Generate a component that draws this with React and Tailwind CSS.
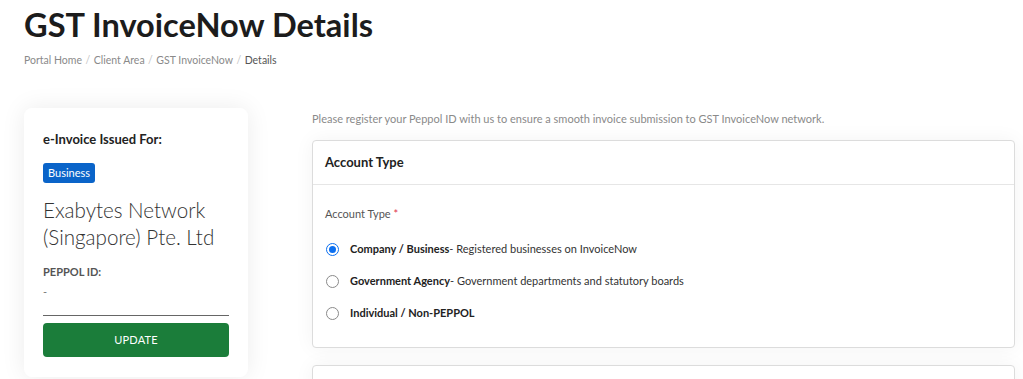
import React from 'react'

const options = [
  { title: 'Company / Business', desc: '- Registered businesses on InvoiceNow', checked: true },
  { title: 'Government Agency', desc: '- Government departments and statutory boards' },
  { title: 'Individual / Non-PEPPOL', desc: '' },
]

const Radio = ({ checked }) => (
  <span
    className={
      checked
        ? 'w-[13px] h-[13px] rounded-full border border-[#0b6ff0] bg-white flex items-center justify-center'
        : 'w-[13px] h-[13px] rounded-full border border-[#8a8a8a] bg-white'
    }
  >
    {checked && <span className="w-[7px] h-[7px] rounded-full bg-[#0b6ff0]" />}
  </span>
)

const App = () => {
  return (
    <div className="h-[379px] bg-white text-[#222] pl-6 pr-2 overflow-hidden" style={{ fontFamily: 'Lato, "Open Sans", sans-serif' }}>
      <h1 className="text-[32.6px] font-bold leading-[48px] pt-[1px] text-[#1c1c1c]">GST InvoiceNow Details</h1>
      <div className="text-[10.5px] leading-4 mt-[3px] text-[#8a8a8a] flex gap-[3.5px]">
        <span>Portal Home</span><span className="text-[#c4c4c4]">/</span>
        <span>Client Area</span><span className="text-[#c4c4c4]">/</span>
        <span>GST InvoiceNow</span><span className="text-[#c4c4c4]">/</span>
        <span className="text-[#555]">Details</span>
      </div>

      <div className="flex gap-16 mt-[40px]">
        <div className="w-[224px] shrink-0">
          <div className="bg-white rounded-lg shadow-[0_0_24px_rgba(0,0,0,0.08)] px-[19px] pt-[23px] pb-5">
            <div className="text-[13px] font-bold leading-4 text-[#222]">e-Invoice Issued For:</div>
            <span className="inline-block mt-[16px] bg-[#0a64c9] text-white text-[11px] leading-[20px] px-[5px] rounded-[3px]">Business</span>
            <div className="text-[20.6px] font-light leading-[27px] mt-[14px] text-[#333]">Exabytes Network (Singapore) Pte. Ltd</div>
            <div className="text-[11px] font-bold text-[#555] mt-[13px] leading-4">PEPPOL ID:</div>
            <div className="text-[11px] text-[#777] leading-4 mt-[4px]">-</div>
            <div className="border-b border-[#666] mt-[15px]"></div>
            <button className="w-full mt-[7px] h-[34px] rounded bg-[#1b7d3a] text-white text-[11px] tracking-[0.2px]">UPDATE</button>
          </div>
        </div>

        <div className="flex-1 pt-[3px]">
          <p className="text-[11px] leading-4 text-[#8a8a8a]">Please register your Peppol ID with us to ensure a smooth invoice submission to GST InvoiceNow network.</p>
          <div className="mt-[13px] border border-[#dcdcdc] rounded bg-white shadow-[0_0_20px_rgba(0,0,0,0.05)]">
            <div className="h-[44px] px-[12px] flex items-center border-b border-[#e6e6e6] text-[13px] font-bold text-[#222]">Account Type</div>
            <div className="px-[12px] pt-[21px] pb-[26px]">
              <div className="text-[11px] text-[#555] leading-4">Account Type <span className="text-[#e0324b]">*</span></div>
              <div className="mt-[19px] flex flex-col gap-[16px]">
                {options.map(o => (
                  <label key={o.title} className="flex items-center gap-[11px] h-4 pl-px">
                    <Radio checked={o.checked} />
                    <span className="text-[11px] text-[#333] leading-4">
                      <span className="font-bold text-[#222]">{o.title}</span>{o.desc}
                    </span>
                  </label>
                ))}
              </div>
            </div>
          </div>
          <div className="mt-[17px] h-10 border border-[#dcdcdc] rounded bg-white shadow-[0_0_20px_rgba(0,0,0,0.05)]"></div>
        </div>
      </div>
    </div>
  )
}

export default App
